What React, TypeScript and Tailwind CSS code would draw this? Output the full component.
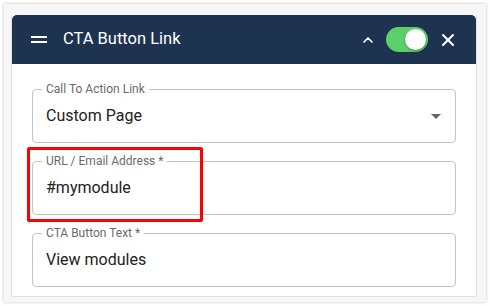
import { ChevronUp, X } from "lucide-react";

function Field({ label, value, select }: { label: string; value: string; select?: boolean }) {
  return (
    <div className="relative h-[54px] rounded-[4px] border border-[#c4c4c4] bg-white">
      <span className="absolute -top-[8px] left-[9px] bg-white px-[4px] text-[12px] leading-[14px] text-[#6b6b6b]">
        {label}
      </span>
      <div className="flex h-full items-center pl-[13px] pr-[14px] text-[16px] text-[#222]">
        <span className="flex-1">{value}</span>
        {select && (
          <span className="h-0 w-0 border-x-[5px] border-t-[5px] border-x-transparent border-t-[#666]" />
        )}
      </div>
    </div>
  );
}

export default function App() {
  return (
    <div className="h-[306px] w-[490px] bg-white p-[4px] font-['Roboto',sans-serif]">
      <div className="h-[298px] w-[482px] bg-[#f7f7f7] px-[7px] pt-[11px] shadow-[0_0_3px_rgba(0,0,0,0.25)]">
        <div className="h-[282px] w-[466px] border-x border-b border-[#e2e2e2] bg-white">
          <div className="flex h-[49px] items-center rounded-t-[5px] bg-[#1e3350] pl-[19px] pr-[18px] text-white">
            <div className="flex w-[16px] flex-col gap-[3px]">
              <span className="h-[2px] bg-white" />
              <span className="h-[2px] bg-white" />
            </div>
            <span className="ml-[16px] flex-1 text-[16.5px]">CTA Button Link</span>
            <ChevronUp className="h-[16px] w-[16px]" strokeWidth={2.5} />
            <div className="ml-[10px] flex h-[25px] w-[42px] items-center justify-end rounded-full bg-[#5acf6a] pr-[2px]">
              <span className="h-[21px] w-[21px] rounded-full bg-white shadow-[0_1px_2px_rgba(0,0,0,0.3)]" />
            </div>
            <X className="ml-[10px] h-[20px] w-[20px]" strokeWidth={2.5} />
          </div>
          <div className="flex flex-col gap-[18px] px-[20px] pt-[25px]">
            <Field label="Call To Action Link" value="Custom Page" select />
            <div className="relative">
              <Field label="URL / Email Address *" value="#mymodule" />
              <div className="pointer-events-none absolute -left-[5px] -top-[14px] h-[75px] w-[176px] rounded-[2px] border-[3px] border-[#f00]" />
            </div>
            <Field label="CTA Button Text *" value="View modules" />
          </div>
        </div>
      </div>
    </div>
  );
}
